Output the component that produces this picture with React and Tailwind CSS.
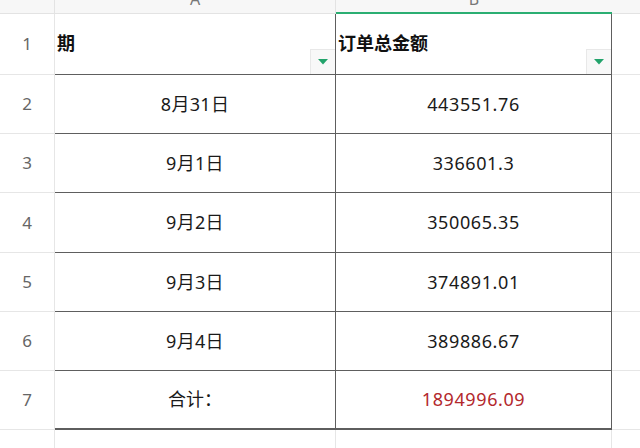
const rows = [
  { n: 2, date: '8月31日', amount: '443551.76', h: 'h-[59px]' },
  { n: 3, date: '9月1日', amount: '336601.3', h: 'h-[59px]' },
  { n: 4, date: '9月2日', amount: '350065.35', h: 'h-[60px]' },
  { n: 5, date: '9月3日', amount: '374891.01', h: 'h-[59px]' },
  { n: 6, date: '9月4日', amount: '389886.67', h: 'h-[59px]' },
];

const font = { fontFamily: '"Noto Sans", "Noto Sans CJK SC", sans-serif' };

const FilterButton = () => (
  <div className="absolute right-0 bottom-0 w-[25px] h-[25px] bg-[#f8f8f8] border-l border-t border-[#e8e8e8] flex items-center justify-center">
    <svg width="10" height="6" viewBox="0 0 10 6">
      <path d="M0 0 L10 0 L5 5.5 Z" fill="#22a36b" />
    </svg>
  </div>
);

const RowNum = ({ n, h }) => (
  <div className={`w-[55px] shrink-0 ${h} border-r border-b border-[#e6e6e6] flex items-center justify-center text-[17px] text-[#666]`}>
    {n}
  </div>
);

export default function App() {
  return (
    <div className="w-[640px] h-[448px] overflow-hidden bg-white text-[#1a1a1a]" style={font}>
      {/* Column header */}
      <div className="flex h-[14px] bg-[#f7f7f7]">
        <div className="w-[55px] shrink-0 border-r border-b border-[#e3e3e3]" />
        <div className="w-[281px] shrink-0 border-r border-b border-[#e3e3e3] flex justify-center overflow-hidden">
          <span className="text-[16px] leading-none mt-[-9px] text-[#777]">A</span>
        </div>
        <div className="w-[276px] shrink-0 border-b-2 border-[#2bae72] flex justify-center overflow-hidden">
          <span className="text-[16px] leading-none mt-[-9px] text-[#777]">B</span>
        </div>
        <div className="flex-1 border-b border-[#e3e3e3]" />
      </div>

      {/* Row 1 */}
      <div className="flex">
        <RowNum n={1} h="h-[61px]" />
        <div className="relative w-[281px] shrink-0 h-[61px] border-r border-b border-[#5e5e5e] flex items-center pl-[2px] pb-[2px] text-[18px] font-bold text-[#111]">
          期
          <FilterButton />
        </div>
        <div className="relative w-[276px] shrink-0 h-[61px] border-r border-b border-[#5e5e5e] flex items-center pl-[2px] pb-[2px] text-[18px] font-bold text-[#111]">
          订单总金额
          <FilterButton />
        </div>
        <div className="flex-1 h-[61px] border-b border-[#e6e6e6]" />
      </div>

      {rows.map((r) => (
        <div key={r.n} className="flex">
          <RowNum n={r.n} h={r.h} />
          <div className={`w-[281px] shrink-0 ${r.h} border-r border-b border-[#5e5e5e] flex items-center justify-center text-[18px] tracking-[0.3px]`}>
            {r.date}
          </div>
          <div className={`w-[276px] shrink-0 ${r.h} border-r border-b border-[#5e5e5e] flex items-center justify-center text-[18px] tracking-[0.6px]`}>
            {r.amount}
          </div>
          <div className={`flex-1 ${r.h} border-b border-[#e6e6e6]`} />
        </div>
      ))}

      {/* Total */}
      <div className="flex">
        <RowNum n={7} h="h-[59px]" />
        <div className="w-[281px] shrink-0 h-[59px] border-r border-b-2 border-[#5e5e5e] flex items-center justify-center text-[18px]">
          合计：
        </div>
        <div className="w-[276px] shrink-0 h-[59px] border-r border-b-2 border-[#5e5e5e] flex items-center justify-center text-[18px] tracking-[0.6px] text-[#b3282d]">
          1894996.09
        </div>
        <div className="flex-1 h-[59px] border-b border-[#e6e6e6]" />
      </div>

      {/* Row 8 */}
      <div className="flex h-[30px]">
        <div className="w-[55px] shrink-0 border-r border-[#e6e6e6]" />
        <div className="w-[281px] shrink-0 border-r border-[#e6e6e6]" />
        <div className="w-[276px] shrink-0 border-r border-[#e6e6e6]" />
        <div className="flex-1" />
      </div>
    </div>
  );
}
